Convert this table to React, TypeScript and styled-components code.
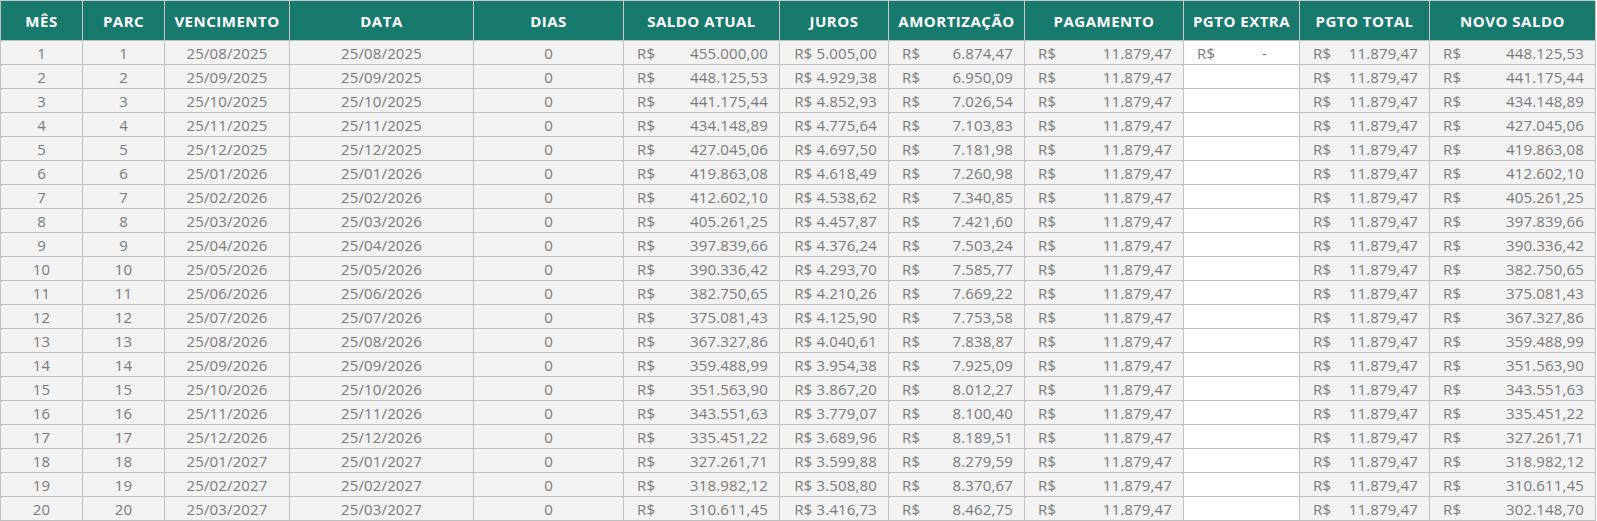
import React from "react";
import styled, { createGlobalStyle } from "styled-components";

const GlobalStyle = createGlobalStyle`
  html, body { margin: 0; padding: 0; background: #ffffff; }
  body { font-family: "Open Sans", "Noto Sans", Arial, sans-serif; }
`;

const COLS = "82px 82px 125px 184px 150px 156px 109px 136px 159px 116px 130px 166px";

const Table = styled.div`
  display: grid;
  grid-template-columns: ${COLS};
  width: 1596px;
  border-left: 1px solid #bfbfbf;
  box-sizing: border-box;
  font-family: "Open Sans", "Noto Sans", Arial, sans-serif;
`;

const HeadCell = styled.div`
  box-sizing: border-box;
  height: 41px;
  background: #187a6c;
  color: #ffffff;
  font-weight: 700;
  font-size: 15px;
  letter-spacing: 0.5px;
  display: flex;
  align-items: center;
  justify-content: center;
  border-top: 1px solid #c9c9c9;
  border-right: 1px solid #c9c9c9;
  border-bottom: 1px solid #bfbfbf;
  white-space: nowrap;
`;

const Cell = styled.div<{ $white?: boolean; $align?: "center" | "right" | "split" }>`
  box-sizing: border-box;
  height: 24px;
  background: ${(p) => (p.$white ? "#ffffff" : "#f2f2f2")};
  color: #7a7a7a;
  font-size: 15px;
  letter-spacing: 0.15px;
  border-right: 1px solid #bfbfbf;
  border-bottom: 1px solid #bfbfbf;
  display: flex;
  align-items: center;
  white-space: nowrap;
  justify-content: ${(p) =>
    p.$align === "right" ? "flex-end" : p.$align === "split" ? "space-between" : "center"};
  padding: ${(p) => (p.$align === "center" || !p.$align ? "0" : "0 11px 0 13px")};
`;

const Dash = styled.span`
  padding-right: 21px;
`;

type Row = [string, string, string, string, string];

const DATA: Row[] = [
  ["25/08/2025", "455.000,00", "5.005,00", "6.874,47", "448.125,53"],
  ["25/09/2025", "448.125,53", "4.929,38", "6.950,09", "441.175,44"],
  ["25/10/2025", "441.175,44", "4.852,93", "7.026,54", "434.148,89"],
  ["25/11/2025", "434.148,89", "4.775,64", "7.103,83", "427.045,06"],
  ["25/12/2025", "427.045,06", "4.697,50", "7.181,98", "419.863,08"],
  ["25/01/2026", "419.863,08", "4.618,49", "7.260,98", "412.602,10"],
  ["25/02/2026", "412.602,10", "4.538,62", "7.340,85", "405.261,25"],
  ["25/03/2026", "405.261,25", "4.457,87", "7.421,60", "397.839,66"],
  ["25/04/2026", "397.839,66", "4.376,24", "7.503,24", "390.336,42"],
  ["25/05/2026", "390.336,42", "4.293,70", "7.585,77", "382.750,65"],
  ["25/06/2026", "382.750,65", "4.210,26", "7.669,22", "375.081,43"],
  ["25/07/2026", "375.081,43", "4.125,90", "7.753,58", "367.327,86"],
  ["25/08/2026", "367.327,86", "4.040,61", "7.838,87", "359.488,99"],
  ["25/09/2026", "359.488,99", "3.954,38", "7.925,09", "351.563,90"],
  ["25/10/2026", "351.563,90", "3.867,20", "8.012,27", "343.551,63"],
  ["25/11/2026", "343.551,63", "3.779,07", "8.100,40", "335.451,22"],
  ["25/12/2026", "335.451,22", "3.689,96", "8.189,51", "327.261,71"],
  ["25/01/2027", "327.261,71", "3.599,88", "8.279,59", "318.982,12"],
  ["25/02/2027", "318.982,12", "3.508,80", "8.370,67", "310.611,45"],
  ["25/03/2027", "310.611,45", "3.416,73", "8.462,75", "302.148,70"],
];

const HEADERS = [
  "MÊS",
  "PARC",
  "VENCIMENTO",
  "DATA",
  "DIAS",
  "SALDO ATUAL",
  "JUROS",
  "AMORTIZAÇÃO",
  "PAGAMENTO",
  "PGTO EXTRA",
  "PGTO TOTAL",
  "NOVO SALDO",
];

const Money: React.FC<{ v: string; white?: boolean }> = ({ v, white }) => (
  <Cell $align="split" $white={white}>
    <span>R$</span>
    <span>{v}</span>
  </Cell>
);

export default function App() {
  return (
    <>
      <GlobalStyle />
      <Table>
        {HEADERS.map((h) => (
          <HeadCell key={h}>{h}</HeadCell>
        ))}
        {DATA.map((r, i) => {
          const n = String(i + 1);
          return (
            <React.Fragment key={n}>
              <Cell>{n}</Cell>
              <Cell>{n}</Cell>
              <Cell>{r[0]}</Cell>
              <Cell>{r[0]}</Cell>
              <Cell>0</Cell>
              <Money v={r[1]} />
              <Cell $align="right">R$ {r[2]}</Cell>
              <Money v={r[3]} />
              <Money v="11.879,47" />
              {i === 0 ? (
                <Cell $align="split" $white>
                  <span>R$</span>
                  <Dash>-</Dash>
                </Cell>
              ) : (
                <Cell $white />
              )}
              <Money v="11.879,47" />
              <Money v={r[4]} />
            </React.Fragment>
          );
        })}
      </Table>
    </>
  );
}
